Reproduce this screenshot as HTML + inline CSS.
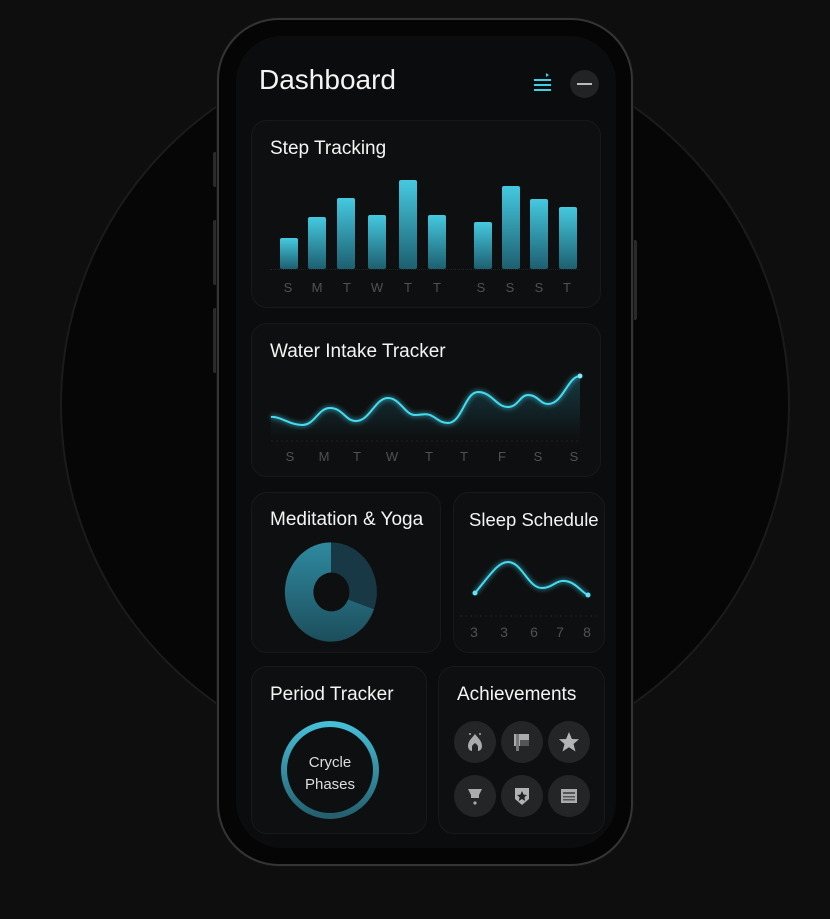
<!DOCTYPE html>
<html><head><meta charset="utf-8"><style>
*{margin:0;padding:0;box-sizing:border-box}
body{width:830px;height:919px;background:#0e0e0e;position:relative;overflow:hidden;font-family:"Liberation Sans",sans-serif;color:#f2f2f2}
.circle{position:absolute;left:60px;top:40px;width:730px;height:730px;border-radius:50%;background:#060606;border:2px solid #1b1b1b}
.phone{position:absolute;left:217px;top:18px;width:416px;height:848px;border-radius:62px;background:#050505;border:2px solid #333436;box-shadow:0 0 0 1px #111}
.btn{position:absolute;width:4px;background:#2a2a2a;border-radius:2px}
.screen{position:absolute;left:236px;top:36px;width:380px;height:812px;border-radius:46px;background:#0b0c0d}
.card{position:absolute;background:#0e0f10;border:1px solid #18191b;border-radius:16px}
.t{position:absolute;font-size:19px;color:#f4f4f4;white-space:nowrap}
.lbl{position:absolute;font-size:13px;color:#4e5254;transform:translateX(-50%)}
.bar{position:absolute;width:18px;border-radius:2px;background:linear-gradient(#45c9e0,#1d5f70)}
.ach{position:absolute;width:42px;height:42px;border-radius:50%;background:#242526;display:flex;align-items:center;justify-content:center}
</style></head><body>
<div class="circle"></div>
<div class="btn" style="left:213px;top:152px;height:35px"></div>
<div class="btn" style="left:213px;top:220px;height:65px"></div>
<div class="btn" style="left:213px;top:308px;height:65px"></div>
<div class="btn" style="left:633px;top:240px;height:80px"></div>
<div class="phone"></div>
<div class="screen"></div>
<div class="t" style="left:259px;top:64px;font-size:28px">Dashboard</div>
<svg style="position:absolute;left:530px;top:70px" width="26" height="26" viewBox="0 0 26 26"><g stroke="#3fd0e8" stroke-width="2"><line x1="4" y1="10" x2="21" y2="10"/><line x1="4" y1="15" x2="21" y2="15"/><line x1="4" y1="20" x2="21" y2="20"/></g><path d="M16 3 L19 5 L16 7Z" fill="#3fd0e8"/></svg>
<div style="position:absolute;left:570px;top:70px;width:29px;height:28px;border-radius:50%;background:#222325"><div style="position:absolute;left:7px;top:13px;width:15px;height:2px;background:#bbb"></div></div>

<div class="card" style="left:251px;top:120px;width:350px;height:188px"></div>
<div class="t" style="left:270px;top:138px">Step Tracking</div>
<div style="position:absolute;left:270px;top:269px;width:310px;border-top:1px dotted #222"></div>
<div class="bar" style="left:280px;top:238px;height:31px"></div>
<div class="bar" style="left:308px;top:217px;height:52px"></div>
<div class="bar" style="left:337px;top:198px;height:71px"></div>
<div class="bar" style="left:368px;top:215px;height:54px"></div>
<div class="bar" style="left:399px;top:180px;height:89px"></div>
<div class="bar" style="left:428px;top:215px;height:54px"></div>
<div class="bar" style="left:474px;top:222px;height:47px"></div>
<div class="bar" style="left:502px;top:186px;height:83px"></div>
<div class="bar" style="left:530px;top:199px;height:70px"></div>
<div class="bar" style="left:559px;top:207px;height:62px"></div>
<div class="lbl" style="left:288px;top:280px">S</div><div class="lbl" style="left:317px;top:280px">M</div><div class="lbl" style="left:347px;top:280px">T</div><div class="lbl" style="left:377px;top:280px">W</div><div class="lbl" style="left:408px;top:280px">T</div><div class="lbl" style="left:437px;top:280px">T</div><div class="lbl" style="left:481px;top:280px">S</div><div class="lbl" style="left:510px;top:280px">S</div><div class="lbl" style="left:539px;top:280px">S</div><div class="lbl" style="left:567px;top:280px">T</div>

<div class="card" style="left:251px;top:323px;width:350px;height:154px"></div>
<div class="t" style="left:270px;top:341px">Water Intake Tracker</div>
<div class="lbl" style="left:290px;top:449px">S</div><div class="lbl" style="left:324px;top:449px">M</div><div class="lbl" style="left:357px;top:449px">T</div><div class="lbl" style="left:392px;top:449px">W</div><div class="lbl" style="left:429px;top:449px">T</div><div class="lbl" style="left:464px;top:449px">T</div><div class="lbl" style="left:502px;top:449px">F</div><div class="lbl" style="left:538px;top:449px">S</div><div class="lbl" style="left:574px;top:449px">S</div>

<div class="card" style="left:251px;top:492px;width:190px;height:161px"></div>
<div class="t" style="left:270px;top:509px">Meditation &amp; Yoga</div>
<div class="card" style="left:453px;top:492px;width:152px;height:161px"></div>
<div class="t" style="left:469px;top:509px;font-size:18.5px">Sleep Schedule</div>
<div class="lbl" style="left:474px;top:624px;font-size:14px">3</div><div class="lbl" style="left:504px;top:624px;font-size:14px">3</div><div class="lbl" style="left:534px;top:624px;font-size:14px">6</div><div class="lbl" style="left:560px;top:624px;font-size:14px">7</div><div class="lbl" style="left:587px;top:624px;font-size:14px">8</div>

<div class="card" style="left:251px;top:666px;width:176px;height:168px"></div>
<div class="t" style="left:270px;top:684px">Period Tracker</div>
<div class="card" style="left:438px;top:666px;width:167px;height:168px"></div>
<div class="t" style="left:457px;top:684px">Achievements</div>

<svg style="position:absolute;left:0;top:0" width="830" height="919">
<defs><linearGradient id="wg" x1="0" y1="0" x2="0" y2="1"><stop offset="0" stop-color="#2bb8d6" stop-opacity=".25"/><stop offset="1" stop-color="#2bb8d6" stop-opacity="0"/></linearGradient>
<filter id="gl"><feGaussianBlur stdDeviation="2.5"/></filter>
<linearGradient id="dg" x1="0" y1="0" x2="0" y2="1"><stop offset="0" stop-color="#2f8aa0"/><stop offset="1" stop-color="#1c4e5c"/></linearGradient>
<linearGradient id="rg" x1="0" y1="0" x2="0" y2="1"><stop offset="0" stop-color="#46bfd8"/><stop offset="1" stop-color="#24606e"/></linearGradient></defs>
<path d="M271 417 C280 416 290 425 302 425 C315 425 318 408 330 408 C343 408 345 421 356 421 C370 421 375 398 388 398 C400 398 405 415 415 415 C422 415 425 413 430 415 C437 418 440 423 448 423 C462 423 465 392 478 392 C492 392 496 407 508 407 C518 407 520 395 528 395 C538 395 540 404 548 404 C563 404 568 376 580 376 L580 440 L271 440Z" fill="url(#wg)"/>
<path d="M271 417 C280 416 290 425 302 425 C315 425 318 408 330 408 C343 408 345 421 356 421 C370 421 375 398 388 398 C400 398 405 415 415 415 C422 415 425 413 430 415 C437 418 440 423 448 423 C462 423 465 392 478 392 C492 392 496 407 508 407 C518 407 520 395 528 395 C538 395 540 404 548 404 C563 404 568 376 580 376" fill="none" stroke="#3fd8f0" stroke-width="4" opacity=".5" filter="url(#gl)"/>
<path d="M271 417 C280 416 290 425 302 425 C315 425 318 408 330 408 C343 408 345 421 356 421 C370 421 375 398 388 398 C400 398 405 415 415 415 C422 415 425 413 430 415 C437 418 440 423 448 423 C462 423 465 392 478 392 C492 392 496 407 508 407 C518 407 520 395 528 395 C538 395 540 404 548 404 C563 404 568 376 580 376" fill="none" stroke="#45dcf2" stroke-width="2"/>
<circle cx="580" cy="376" r="2.5" fill="#7eeaf8"/>
<line x1="271" y1="441" x2="580" y2="441" stroke="#1f2224" stroke-dasharray="2 3"/>
<path d="M475 593 C490 575 498 562 508 562 C522 562 528 588 542 588 C552 588 556 580 565 581 C576 582 582 593 588 595" fill="none" stroke="#3fd8f0" stroke-width="4" opacity=".5" filter="url(#gl)"/>
<path d="M475 593 C490 575 498 562 508 562 C522 562 528 588 542 588 C552 588 556 580 565 581 C576 582 582 593 588 595" fill="none" stroke="#45dcf2" stroke-width="2"/>
<circle cx="475" cy="593" r="2.5" fill="#5fe3f5"/><circle cx="588" cy="595" r="2.5" fill="#5fe3f5"/>
<line x1="460" y1="616" x2="598" y2="616" stroke="#1f2224" stroke-dasharray="2 3"/>
<g transform="translate(331 592) scale(1 1.08)">
<path d="M0 -46 A46 46 0 0 1 43 16 L17 7 A18 18 0 0 0 0 -18Z" fill="#173844"/>
<path d="M0 -46 A46 46 0 1 0 43 16 L17 7 A18 18 0 1 1 0 -18Z" fill="url(#dg)"/>
</g>
<circle cx="330" cy="770" r="46" fill="none" stroke="url(#rg)" stroke-width="6"/>
</svg>
<div style="position:absolute;left:290px;top:752px;width:80px;text-align:center;font-size:15px;line-height:22px;color:#ddd">Crycle<br>Phases</div>

<div class="ach" style="left:454px;top:721px"><svg width="22" height="22" viewBox="0 0 22 22"><path d="M11 3 C14 7 18 10 18 15 C18 19 15 20 14 20 L14 16 C14 14 12 13 11 12 C10 13 8 14 8 16 L8 20 C7 20 4 19 4 15 C4 10 8 7 11 3Z" fill="#a9abad"/><circle cx="6" cy="3" r="1" fill="#aaa"/><circle cx="16" cy="3" r="1" fill="#aaa"/></svg></div>
<div class="ach" style="left:501px;top:721px"><svg width="22" height="22" viewBox="0 0 22 22"><rect x="3" y="3" width="15" height="12" fill="#a9abad"/><rect x="9" y="9" width="9" height="6" fill="#555"/><rect x="5" y="3" width="3" height="17" fill="#777"/></svg></div>
<div class="ach" style="left:548px;top:721px"><svg width="24" height="24" viewBox="0 0 24 24"><path d="M12 2 L14.9 9 L22 9.3 L16.5 14 L18.5 21.5 L12 17.3 L5.5 21.5 L7.5 14 L2 9.3 L9.1 9Z" fill="#b2b4b6"/></svg></div>
<div class="ach" style="left:454px;top:775px"><svg width="22" height="22" viewBox="0 0 22 22"><path d="M4 4 L18 4 L15 10 L15 13 L7 13 L7 10Z" fill="#a9abad"/><circle cx="11" cy="18" r="1.6" fill="#aaa"/></svg></div>
<div class="ach" style="left:501px;top:775px"><svg width="22" height="22" viewBox="0 0 22 22"><path d="M4 3 L18 3 L18 14 L11 20 L4 14Z" fill="#b0b2b4"/><path d="M11 6 L12.6 9.6 L16 10 L13.4 12.3 L14.2 16 L11 14 L7.8 16 L8.6 12.3 L6 10 L9.4 9.6Z" fill="#222"/></svg></div>
<div class="ach" style="left:548px;top:775px"><svg width="22" height="22" viewBox="0 0 22 22"><rect x="3" y="4" width="16" height="14" fill="#a9abad"/><rect x="5" y="7" width="12" height="2" fill="#555"/><rect x="5" y="11" width="12" height="1.5" fill="#555"/><rect x="5" y="14" width="12" height="1.5" fill="#555"/></svg></div>
</body></html>
